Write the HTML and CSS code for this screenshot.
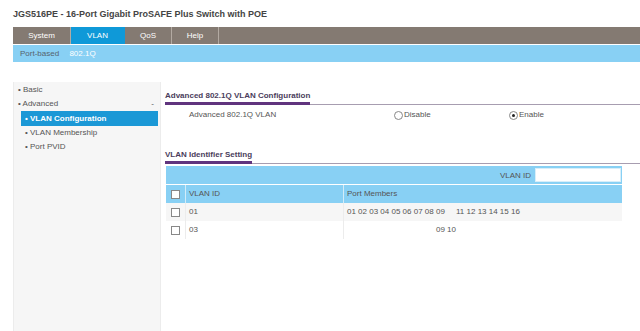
FILE: index.html
```html
<!DOCTYPE html>
<html>
<head>
    <title>JGS516PE</title>
    <link rel="stylesheet" href="styles.css">
</head>
<body>
    <div class="title">JGS516PE - 16-Port Gigabit ProSAFE Plus Switch with POE</div>
    <div class="topnav">
        <div class="tab">System</div>
        <div class="tab active">VLAN</div>
        <div class="tab">QoS</div>
        <div class="tab">Help</div>
    </div>
    <div class="subnav">
        <span class="sub">Port-based</span>
        <span class="sub current">802.1Q</span>
    </div>

    <div class="main">
        <div class="sidebar">
            <div class="item">• Basic</div>
            <div class="item group"><span>• Advanced</span><span class="fold">-</span></div>
            <div class="item child selected">• VLAN Configuration</div>
            <div class="item child">• VLAN Membership</div>
            <div class="item child">• Port PVID</div>
        </div>

        <div class="content">
            <div class="section-head"><span>Advanced 802.1Q VLAN Configuration</span></div>
            <div class="option-row">
                <div class="option-label">Advanced 802.1Q VLAN</div>
                <div class="option"><span class="radio"></span>Disable</div>
                <div class="option"><span class="radio on"></span>Enable</div>
            </div>

            <div class="section-head second"><span>VLAN Identifier Setting</span></div>
            <div class="vlan-table">
                <div class="search-row">
                    <span>VLAN ID</span>
                    <div class="id-input"></div>
                </div>
                <div class="row head">
                    <div class="cell check"><span class="box"></span></div>
                    <div class="cell vid">VLAN ID</div>
                    <div class="cell ports">Port Members</div>
                </div>
                <div class="row odd">
                    <div class="cell check"><span class="box"></span></div>
                    <div class="cell vid">01</div>
                    <div class="cell ports">01 02 03 04 05 06 07 08 09&nbsp;&nbsp;&nbsp;&nbsp; 11 12 13 14 15 16</div>
                </div>
                <div class="row">
                    <div class="cell check"><span class="box"></span></div>
                    <div class="cell vid">03</div>
                    <div class="cell ports"><span class="pad-ports">09 10</span></div>
                </div>
            </div>
        </div>
    </div>
</body>
</html>
```

FILE: styles.css
```css
body {
    margin: 0;
    font-family: "Liberation Sans", Arial, sans-serif;
    font-size: 8px;
    color: #555;
    background: #fff;
    overflow: hidden;
}
.title {
    height: 27px;
    padding: 0 13px;
    line-height: 28px;
    font-size: 9px;
    font-weight: bold;
    color: #444;
}
.topnav {
    display: flex;
    margin-left: 13px;
    height: 17px;
    background: #847a72;
}
.tab {
    width: 57px;
    line-height: 17px;
    text-align: center;
    color: #fff;
    border-right: 1px solid #b3aaa2;
}
.tab:nth-child(2) { width: 53px; }
.tab:nth-child(3) { width: 46px; }
.tab:nth-child(4) { width: 46px; }
.tab.active {
    background: #0f99d8;
    border-right-color: #0f99d8;
}
.subnav {
    margin: 1px 0 0 13px;
    height: 17px;
    line-height: 17px;
    background: #88d0f4;
    padding-left: 7px;
}
.sub {
    color: #56636e;
    margin-right: 8px;
}
.sub.current {
    color: #fff;
}
.main {
    display: flex;
    margin-top: 20px;
    padding-left: 13px;
}
.sidebar {
    width: 146px;
    height: 260px;
    padding-top: 1px;
    background: #f6f6f6;
    border-left: 1px solid #ececec;
    border-right: 1px solid #ececec;
}
.item {
    height: 14px;
    line-height: 14px;
    padding-left: 4px;
    color: #555;
}
.group {
    display: flex;
    justify-content: space-between;
    padding-right: 6px;
}
.child {
    margin-left: 7px;
    margin-right: 2px;
    padding-left: 4px;
}
.selected {
    background: #1b98d6;
    color: #fff;
    font-weight: bold;
    height: 15px;
    line-height: 15px;
}
.content {
    flex: 1;
    padding-left: 4px;
}
.section-head {
    margin-top: 8px;
    border-bottom: 1px solid #a79db0;
    height: 14px;
}
.section-head span {
    display: inline-block;
    height: 12px;
    line-height: 12px;
    font-weight: bold;
    color: #4a3d5c;
    border-bottom: 3px solid #60347e;
}
.section-head.second {
    margin-top: 24px;
}
.option-row {
    display: flex;
    height: 20px;
    line-height: 20px;
}
.option-label {
    width: 205px;
    padding-left: 24px;
}
.option {
    width: 115px;
    display: flex;
    align-items: center;
}
.radio {
    display: inline-block;
    width: 7px;
    height: 7px;
    border: 1px solid #888;
    border-radius: 50%;
    background: #fff;
    margin-right: 1px;
    position: relative;
}
.radio.on::after {
    content: "";
    position: absolute;
    left: 2px;
    top: 2px;
    width: 3px;
    height: 3px;
    border-radius: 50%;
    background: #222;
}
.vlan-table {
    width: 456px;
    margin: 2px 0 0 1px;
}
.search-row {
    display: flex;
    justify-content: flex-end;
    align-items: center;
    height: 18px;
    background: #88d0f4;
    color: #555;
}
.id-input {
    width: 84px;
    height: 12px;
    margin: 0 1px 0 4px;
    background: #fff;
    border: 1px solid #d8eef9;
}
.row {
    display: flex;
    height: 18px;
    line-height: 18px;
}
.row.head {
    margin-top: 1px;
    background: #88d0f4;
}
.row.odd {
    background: #f6f6f6;
}
.cell {
    border-right: 1px solid #ececec;
}
.head .cell {
    border-right-color: #d2ecf9;
}
.check {
    width: 19px;
    display: flex;
    align-items: center;
    justify-content: center;
}
.vid {
    width: 154px;
    padding-left: 3px;
}
.ports {
    flex: 1;
    padding-left: 3px;
    border-right: none;
}
.box {
    display: inline-block;
    width: 7px;
    height: 7px;
    border: 1px solid #888;
    background: #fff;
}
.pad-ports {
    padding-left: 89px;
}
```
